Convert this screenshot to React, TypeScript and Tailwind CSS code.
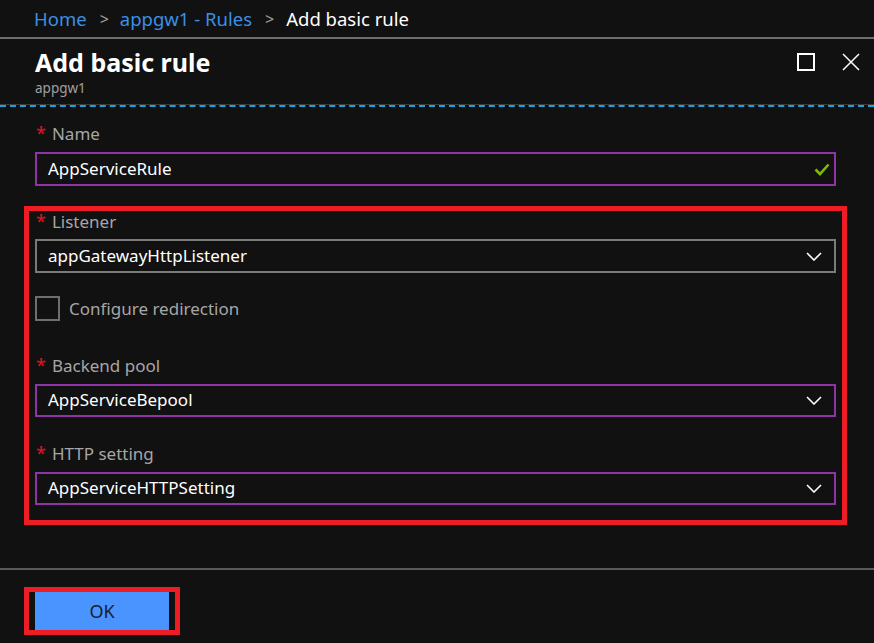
import React from 'react';

const Chevron: React.FC = () => (
  <svg width="16" height="9" viewBox="0 0 16 9" fill="none">
    <path d="M1 1l7 7 7-7" stroke="#ffffff" strokeWidth="1.6" />
  </svg>
);

const Label: React.FC<{ text: string; required?: boolean }> = ({ text, required = true }) => (
  <div className="flex items-start h-[20px] text-[17px] leading-[20px] text-[#a6a6a6]">
    {required && <span className="text-[#e81123] text-[18px] leading-[18px] mr-[6px] ml-[1px]">*</span>}
    <span>{text}</span>
  </div>
);

const SelectBox: React.FC<{ value: string; purple?: boolean }> = ({ value, purple }) => (
  <div
    className={
      purple
        ? 'flex items-center justify-between h-[33px] border-2 border-[#8e34a6] pl-[11px] pr-[12px]'
        : 'flex items-center justify-between h-[34px] border-2 border-[#7a7a7a] pl-[11px] pr-[12px]'
    }
  >
    <span className="text-[17px] text-white">{value}</span>
    <Chevron />
  </div>
);

export default function App() {
  return (
    <div className="w-[874px] h-[643px] bg-[#111111] flex flex-col font-['Segoe_UI','Noto_Sans',sans-serif] overflow-hidden">
      {/* Breadcrumb */}
      <div className="h-[37px] flex items-center pl-[34px] text-[18.5px] shrink-0">
        <span className="text-[#3a8fe5]">Home</span>
        <span className="text-[#a0a0a0] ml-[13px] mr-[11px] text-[16px]">&gt;</span>
        <span className="text-[#3a8fe5]">appgw1 - Rules</span>
        <span className="text-[#a0a0a0] ml-[13px] mr-[12px] text-[16px]">&gt;</span>
        <span className="text-white">Add basic rule</span>
      </div>
      <div className="h-[2px] bg-[#6e6e6e] shrink-0" />

      {/* Header */}
      <div className="h-[65px] flex justify-between shrink-0">
        <div className="pl-[35px] pt-[8px]">
          <div className="text-[25px] font-bold text-white leading-[30px]">Add basic rule</div>
          <div className="text-[13.5px] text-[#a0a0a0] leading-[16px] mt-[3px]">appgw1</div>
        </div>
        <div className="flex items-start pt-[14px] pr-[14px] gap-[27px]">
          <div className="w-[18px] h-[18px] border-2 border-white" />
          <svg width="18" height="18" viewBox="0 0 18 18">
            <path d="M1 1l16 16M17 1L1 17" stroke="#ffffff" strokeWidth="1.5" />
          </svg>
        </div>
      </div>
      <div className="h-[1px] bg-[#3a3a3a] shrink-0" />
      <div className="border-t-2 border-dashed border-[#1aa3e0] shrink-0" />

      {/* Form */}
      <div className="flex-1 flex flex-col pl-[24px] pr-[27px] pt-[17px]">
        <div className="pl-[11px] pr-[11px]">
          <Label text="Name" />
          <div className="mt-[8px] flex items-center justify-between h-[34px] border-2 border-[#8e34a6] pl-[11px] pr-[4px]">
            <span className="text-[17px] text-white">AppServiceRule</span>
            <svg width="16" height="13" viewBox="0 0 16 13" fill="none">
              <path d="M1.5 6.5l4.5 4.5 8.5-9.5" stroke="#7fba00" strokeWidth="2.6" />
            </svg>
          </div>
        </div>

        <div className="mt-[20px] border-[5px] border-[#ee1c25] h-[319px] pl-[6px] pr-[6px] pt-[1px]">
          <Label text="Listener" />
          <div className="mt-[7px]">
            <SelectBox value="appGatewayHttpListener" />
          </div>

          <div className="mt-[23px] flex items-center">
            <div className="w-[25px] h-[25px] border-2 border-[#6e6e6e]" />
            <span className="ml-[9px] text-[17px] text-[#a6a6a6]">Configure redirection</span>
          </div>

          <div className="mt-[34px]">
            <Label text="Backend pool" />
          </div>
          <div className="mt-[8px]">
            <SelectBox value="AppServiceBepool" purple />
          </div>

          <div className="mt-[27px]">
            <Label text="HTTP setting" />
          </div>
          <div className="mt-[8px]">
            <SelectBox value="AppServiceHTTPSetting" purple />
          </div>
        </div>
      </div>

      {/* Footer */}
      <div className="h-[2px] bg-[#5a5a5a] shrink-0" />
      <div className="h-[73px] pl-[24px] pt-[17px] shrink-0">
        <div className="w-[156px] h-[48px] border-[5px] border-[#ee1c25] px-[6px]">
          <button className="w-full h-full bg-[#4a94ff] text-[18px] text-[#16202c]">OK</button>
        </div>
      </div>
    </div>
  );
}
